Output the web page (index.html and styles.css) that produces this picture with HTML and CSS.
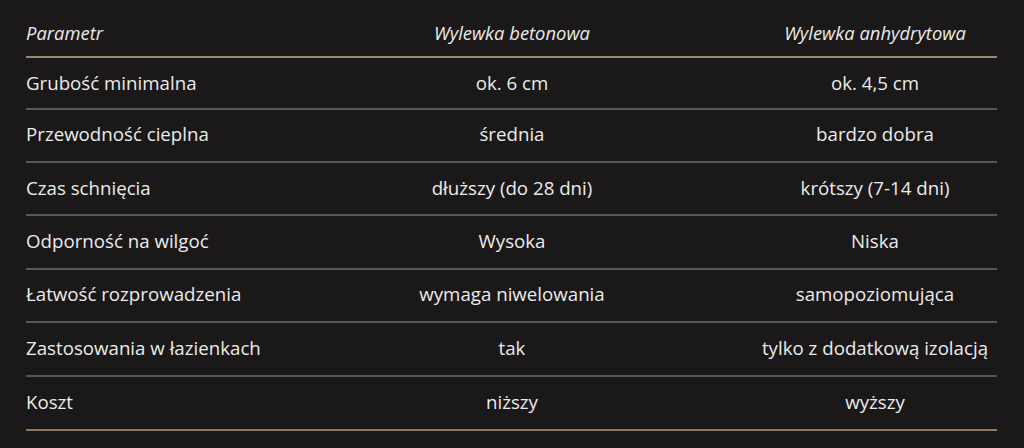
FILE: index.html
```html
<!DOCTYPE html>
<html lang="pl">
<head>
<meta charset="utf-8">
<link rel="stylesheet" href="styles.css">
</head>
<body>
<div class="table">
  <div class="row head">
    <div class="cell first">Parametr</div>
    <div class="cell">Wylewka betonowa</div>
    <div class="cell">Wylewka anhydrytowa</div>
  </div>
  <div class="row top">
    <div class="cell first">Grubość minimalna</div>
    <div class="cell">ok. 6 cm</div>
    <div class="cell">ok. 4,5 cm</div>
  </div>
  <div class="row">
    <div class="cell first">Przewodność cieplna</div>
    <div class="cell">średnia</div>
    <div class="cell">bardzo dobra</div>
  </div>
  <div class="row">
    <div class="cell first">Czas schnięcia</div>
    <div class="cell">dłuższy (do 28 dni)</div>
    <div class="cell">krótszy (7-14 dni)</div>
  </div>
  <div class="row">
    <div class="cell first">Odporność na wilgoć</div>
    <div class="cell">Wysoka</div>
    <div class="cell">Niska</div>
  </div>
  <div class="row">
    <div class="cell first">Łatwość rozprowadzenia</div>
    <div class="cell">wymaga niwelowania</div>
    <div class="cell">samopoziomująca</div>
  </div>
  <div class="row">
    <div class="cell first">Zastosowania w łazienkach</div>
    <div class="cell">tak</div>
    <div class="cell">tylko z dodatkową izolacją</div>
  </div>
  <div class="row last">
    <div class="cell first">Koszt</div>
    <div class="cell">niższy</div>
    <div class="cell">wyższy</div>
  </div>
</div>
</body>
</html>
```
FILE: styles.css
```css
html, body {
  margin: 0;
  padding: 0;
  background: #1a1818;
}
body {
  font-family: "Open Sans", "DejaVu Sans", sans-serif;
  color: #ebebeb;
  font-size: 18.7px;
}
.table {
  margin-left: 26px;
  width: 971px;
}
.row {
  display: grid;
  grid-template-columns: 245px 482px 1fr;
  align-items: center;
  height: 53.4px;
  box-sizing: border-box;
  border-bottom: 2px solid #565656;
  padding-bottom: 3px;
}
.row.head {
  height: 58px;
  padding-top: 8px;
  padding-bottom: 0;
  font-style: italic;
  font-size: 18.4px;
  border-bottom-color: #928c68;
}
.row.top {
  height: 51.6px;
  padding-bottom: 1px;
}
.row.last {
  border-bottom-color: #927a5c;
  height: 54px;
}
.cell {
  text-align: center;
  white-space: nowrap;
}
.cell.first {
  text-align: left;
}
```
